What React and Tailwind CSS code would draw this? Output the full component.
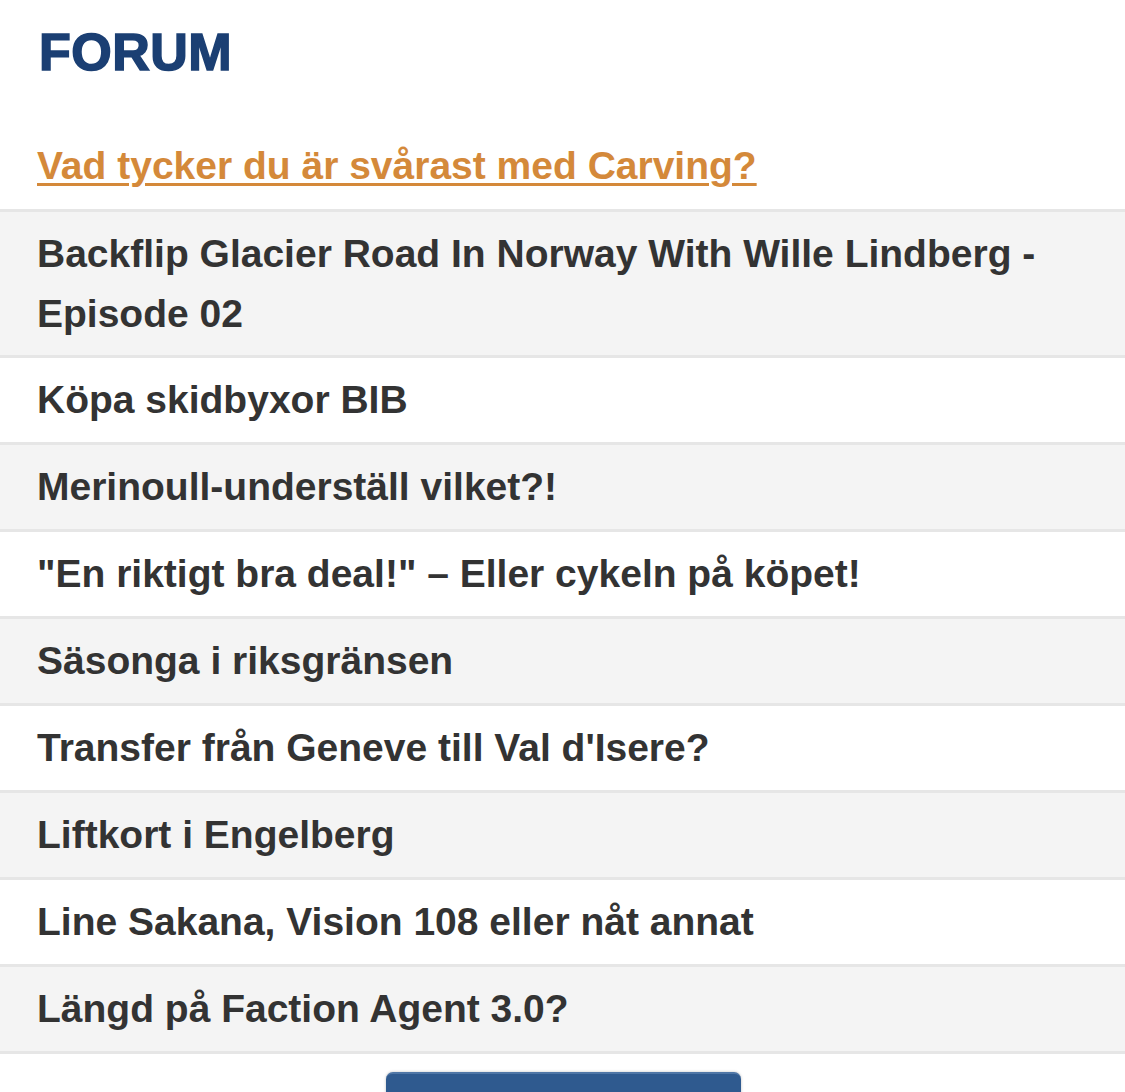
import React from "react";

const topics = [
  "Backflip Glacier Road In Norway With Wille Lindberg - Episode 02",
  "Köpa skidbyxor BIB",
  "Merinoull-underställ vilket?!",
  "\"En riktigt bra deal!\" – Eller cykeln på köpet!",
  "Säsonga i riksgränsen",
  "Transfer från Geneve till Val d'Isere?",
  "Liftkort i Engelberg",
  "Line Sakana, Vision 108 eller nåt annat",
  "Längd på Faction Agent 3.0?",
];

export default function App() {
  return (
    <div
      className="w-[1125px] h-[1092px] overflow-hidden bg-white"
      style={{ fontFamily: '"Liberation Sans", Arial, Helvetica, sans-serif' }}
    >
      <h1 className="pt-[22px] pl-[39px] text-[52px] leading-[60px] font-bold text-[#1b3f73] [-webkit-text-stroke:1.6px_#1b3f73] tracking-[0.5px]">
        FORUM
      </h1>
      <div className="mt-[54px] pl-[37px] text-[39px] leading-[60px] font-bold">
        <a className="text-[#d4893a] underline decoration-[3px] underline-offset-[4px]">
          Vad tycker du är svårast med Carving?
        </a>
      </div>
      <ul className="mt-[13px] border-b-[3px] border-[#e6e6e6]">
        {topics.map((t, i) => (
          <li
            key={i}
            className={`border-t-[3px] border-[#e6e6e6] pl-[37px] pr-[40px] pt-[12px] ${
              i === 0 ? "pb-[11px]" : "pb-[12px]"
            } text-[39px] leading-[60px] font-bold text-[#333333] ${
              i % 2 === 0 ? "bg-[#f4f4f4]" : "bg-white"
            }`}
          >
            {t}
          </li>
        ))}
      </ul>
      <div className="flex justify-center pt-[18px] pl-[2px]">
        <div className="w-[355px] h-[60px] rounded-[7px] bg-[#2f5a8f] border-t-[2px] border-[#4f76a6] shadow-[0_0_3px_rgba(0,0,0,0.25)]" />
      </div>
    </div>
  );
}
